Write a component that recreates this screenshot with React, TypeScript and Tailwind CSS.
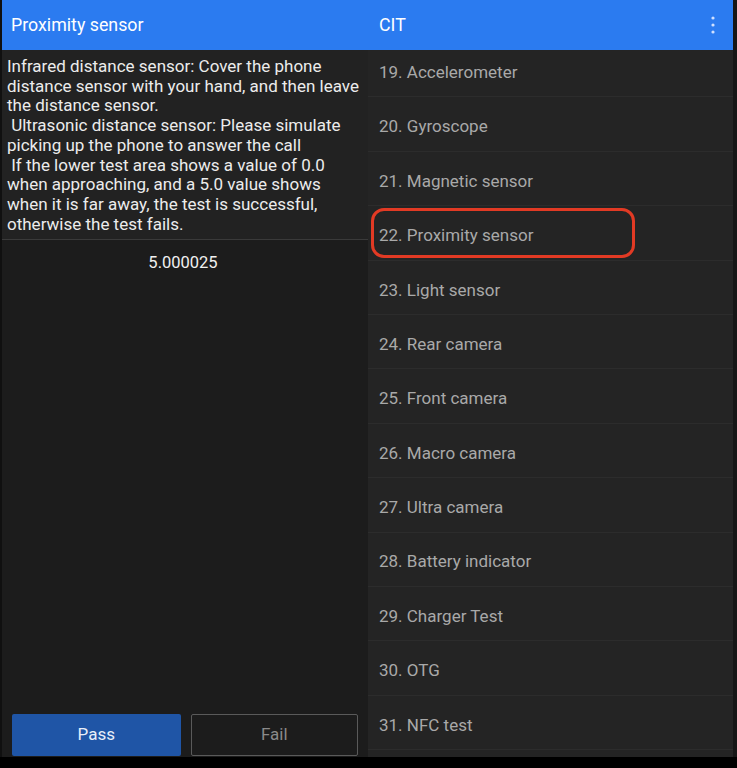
import React from "react";

const items = [
  "19. Accelerometer",
  "20. Gyroscope",
  "21. Magnetic sensor",
  "22. Proximity sensor",
  "23. Light sensor",
  "24. Rear camera",
  "25. Front camera",
  "26. Macro camera",
  "27. Ultra camera",
  "28. Battery indicator",
  "29. Charger Test",
  "30. OTG",
  "31. NFC test",
];

const lines = [
  "Infrared distance sensor: Cover the phone",
  "distance sensor with your hand, and then leave",
  "the distance sensor.",
  " Ultrasonic distance sensor: Please simulate",
  "picking up the phone to answer the call",
  " If the lower test area shows a value of 0.0",
  "when approaching, and a 5.0 value shows",
  "when it is far away, the test is successful,",
  "otherwise the test fails.",
];

export default function App() {
  return (
    <div
      className="w-[737px] h-[768px] bg-black flex flex-col overflow-hidden relative"
      style={{ fontFamily: "Roboto, 'Liberation Sans', sans-serif" }}
    >
      <div className="flex h-[757px]">
        {/* Left panel */}
        <div className="w-[368px] flex flex-col bg-[#1c1c1c] border-l-2 border-[#101010]">
          <div className="h-[50px] bg-[#2b7bf0] flex items-center pl-[9px] text-white text-[17.8px]">
            Proximity sensor
          </div>
          <div className="pt-[7px] pl-[5px] pb-[5px] text-[#ececec] text-[17px] leading-[19.7px] whitespace-pre bg-[#222222] border-b border-[#3a3a3a]">
            {lines.map((l, i) => (
              <div key={i}>{l}</div>
            ))}
          </div>
          <div className="text-center text-[#f0f0f0] text-[16.5px] pt-[11px] pr-[4px]">5.000025</div>
          <div className="flex-1" />
          <div className="flex gap-[10px] px-[10px] pb-[1px]">
            <button className="w-[169px] h-[42px] bg-[#1f55a6] rounded-[2px] text-[#e8eef8] text-[17px]">
              Pass
            </button>
            <button className="w-[168px] h-[42px] border border-[#5a5a5a] rounded-[2px] text-[#8a8a8a] text-[17px]">
              Fail
            </button>
          </div>
        </div>
        {/* Right panel */}
        <div className="flex-1 flex flex-col bg-[#242424] border-r-[4px] border-[#161616]">
          <div className="h-[50px] bg-[#2b7bf0] flex items-center justify-between pl-[11px] pr-[17px] text-white text-[17.8px] relative z-10">
            <span>CIT</span>
            <svg width="6" height="20" viewBox="0 0 6 20" fill="#cfe0ff">
              <circle cx="3" cy="3" r="1.6" />
              <circle cx="3" cy="10" r="1.6" />
              <circle cx="3" cy="17" r="1.6" />
            </svg>
          </div>
          <div className="flex-1 overflow-hidden">
            <div className="-mt-[7px]">
              {items.map((t) => (
                <div
                  key={t}
                  className="h-[54.4px] flex items-center pt-[6px] pl-[11px] text-[#a9a9a9] text-[17px] border-b border-[#2c2c2c]"
                >
                  {t}
                </div>
              ))}
            </div>
          </div>
        </div>
      </div>
      {/* annotation */}
      <div className="absolute left-[371px] top-[208px] w-[264px] h-[50px] border-[3px] border-[#e23a24] rounded-[13px]" />
    </div>
  );
}
